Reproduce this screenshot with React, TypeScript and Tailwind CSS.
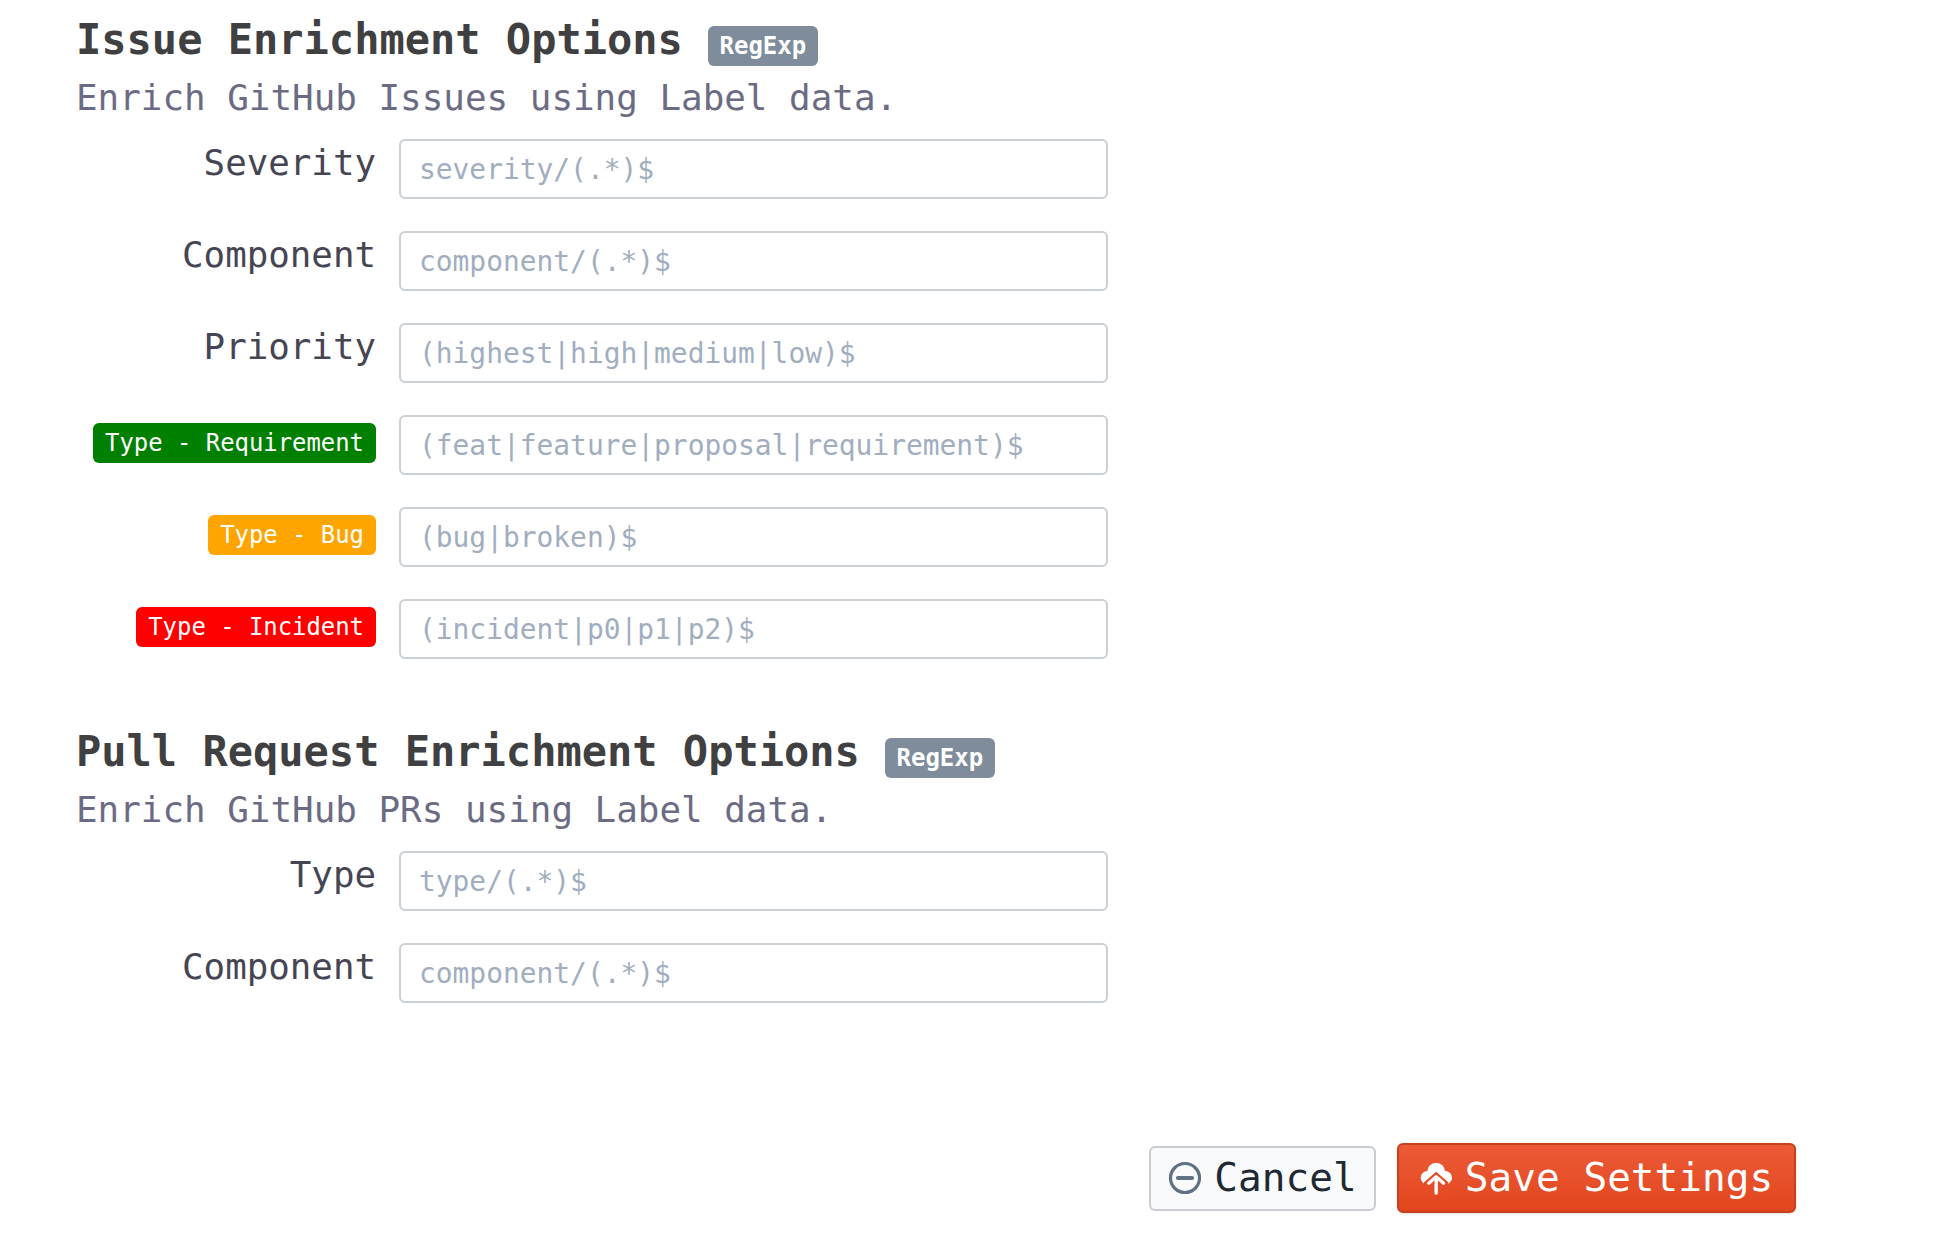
const mono = "font-['DejaVu_Sans_Mono','Liberation_Mono',monospace]"

interface FieldProps {
  label: string
  placeholder: string
  badge?: string
}

function Field({ label, placeholder, badge }: FieldProps) {
  return (
    <div className="flex h-[60px] items-start">
      <div className="flex w-[300px] justify-end">
        {badge ? (
          <span
            className={`mt-[8px] flex h-[40px] items-center rounded-[6px] px-[12px] pt-[1px] text-[23.9px] leading-none text-white ${badge}`}
          >
            {label}
          </span>
        ) : (
          <span className="text-[35.8px] leading-[48px] text-[#454554]">{label}</span>
        )}
      </div>
      <input
        readOnly
        placeholder={placeholder}
        className={`ml-[23px] h-[60px] w-[709px] rounded-[6px] border-2 border-[#cbd0d5] bg-white px-[18px] text-[27.9px] outline-none placeholder:text-[#a0aec0] ${mono}`}
      />
    </div>
  )
}

function Section({ title, sub, top }: { title: string; sub: string; top: string }) {
  return (
    <div className={top}>
      <div className="flex h-[54px] items-center">
        <h2 className="text-[42px] leading-none font-bold text-[#404042]">{title}</h2>
        <span className="ml-[25px] mt-[12px] flex h-[40px] w-[110px] items-center justify-center rounded-[6px] bg-[#7e8c9b] text-[24px] font-bold leading-none text-white">
          RegExp
        </span>
      </div>
      <p className="mt-[6px] h-[50px] text-[35.9px] leading-[50px] text-[#6b6b83]">{sub}</p>
    </div>
  )
}

function MinusCircle() {
  return (
    <svg viewBox="0 0 34 34" className="size-[34px] text-[#5f7183]" fill="none" stroke="currentColor">
      <circle cx="17" cy="17" r="14.5" strokeWidth="3.2" />
      <path d="M10 17h14" strokeWidth="4.2" strokeLinecap="round" />
    </svg>
  )
}

function CloudUpload() {
  return (
    <svg viewBox="40 38 98 98" className="size-[33px]">
      <g fill="#fff">
        <circle cx="88" cy="66" r="26" />
        <circle cx="62" cy="85" r="20" />
        <circle cx="115" cy="85" r="20" />
      </g>
      <path d="M88 67l36 31v40H52V98z" fill="#e64c25" />
      <path d="M66 101l22-19 22 19M88 84v46" fill="none" stroke="#fff" strokeWidth="10" strokeLinecap="round" strokeLinejoin="round" />
    </svg>
  )
}

export default function App() {
  return (
    <div className={`h-[1248px] w-[1958px] bg-white ${mono}`}>
      <div className="pl-[76px] pt-[13px]">
        <Section title="Issue Enrichment Options" sub="Enrich GitHub Issues using Label data." top="" />
        <div className="mt-[16px] flex flex-col gap-[32px]">
          <Field label="Severity" placeholder="severity/(.*)$" />
          <Field label="Component" placeholder="component/(.*)$" />
          <Field label="Priority" placeholder="(highest|high|medium|low)$" />
          <Field label="Type - Requirement" placeholder="(feat|feature|proposal|requirement)$" badge="bg-[#008000]" />
          <Field label="Type - Bug" placeholder="(bug|broken)$" badge="bg-[#ffa500]" />
          <Field label="Type - Incident" placeholder="(incident|p0|p1|p2)$" badge="bg-[#ff0000]" />
        </div>
        <Section title="Pull Request Enrichment Options" sub="Enrich GitHub PRs using Label data." top="mt-[66px]" />
        <div className="mt-[16px] flex flex-col gap-[32px]">
          <Field label="Type" placeholder="type/(.*)$" />
          <Field label="Component" placeholder="component/(.*)$" />
        </div>
      </div>
      <div className="mt-[140px] flex items-center justify-end gap-[21px] pr-[162px]">
        <button className="flex h-[65px] w-[227px] items-center justify-center gap-[12px] rounded-[6px] border-2 border-[#c9ccd1] bg-[#f8fafc] text-[39.4px] text-[#1f2933]">
          <MinusCircle />
          Cancel
        </button>
        <button className="flex h-[70px] w-[399px] items-center justify-center gap-[12px] rounded-[6px] border-2 border-[#c6411d] bg-gradient-to-b from-[#ec5a37] to-[#e2461b] text-[39.4px] text-white shadow-sm">
          <CloudUpload />
          Save Settings
        </button>
      </div>
    </div>
  )
}
